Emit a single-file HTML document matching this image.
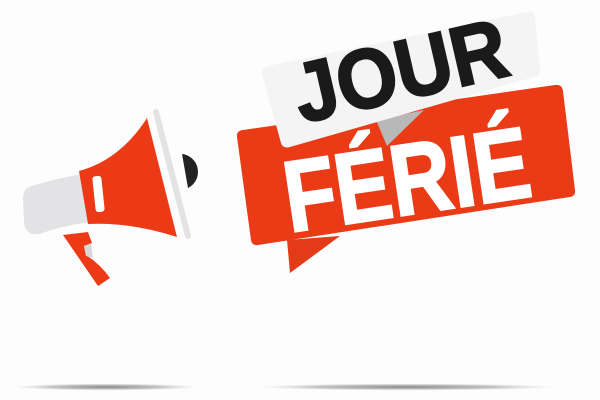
<!DOCTYPE html>
<html><head><meta charset="utf-8"><style>
html,body{margin:0;padding:0;background:#fdfdfd;}
svg{display:block}
</style></head><body>
<svg width="600" height="400" viewBox="0 0 600 400" xmlns="http://www.w3.org/2000/svg">
<defs>
<radialGradient id="sh" cx="50%" cy="50%" r="50%">
<stop offset="0" stop-color="#888"/><stop offset="0.6" stop-color="#aaa" stop-opacity="0.7"/><stop offset="1" stop-color="#ccc" stop-opacity="0"/>
</radialGradient>
</defs>
<rect width="600" height="400" fill="#fdfdfd"/>
<ellipse cx="106" cy="387" rx="92" ry="3.5" fill="url(#sh)"/>
<ellipse cx="406" cy="387" rx="150" ry="3.5" fill="url(#sh)"/>

<!-- megaphone -->
<path d="M63 235 L88 232 L92 243 L84 246 L86 255 Q100 264 110 278 L98 286 Z" fill="#ec3a16"/>
<path d="M84 246 L91 244 L93 258 L86 256 Z" fill="#d8d8d8"/>
<path d="M32 186 Q50 180 82 174 L90 222 Q60 226 40 234 Q25 236 24 222 L23 198 Q23 188 32 186 Z" fill="#e3e3e5"/>
<path d="M79 171 Q120 160 147 118 L177 237 Q130 222 88 224 Z" fill="#ec3a16"/>
<rect x="94" y="176" width="9" height="36" rx="3" fill="#fff" transform="rotate(-6 98 194)"/>
<path d="M182 154 A18 18 0 0 1 188 188 Z" fill="#222"/>
<line x1="156" y1="112" x2="188" y2="236" stroke="#e3e3e5" stroke-width="6" stroke-linecap="round"/>

<!-- red bubble -->
<path d="M287 240 L290 273 L340 236 Z" fill="#e33a17"/>
<path d="M243 130 L555 85 Q562 84 563 91 L575 190 Q576 196 570 197 L258 245 Q252 246 251 240 L237 137 Q236 131 243 130 Z" fill="#ea3a16"/>
<!-- white bubble -->
<path d="M376 120 L387 146 L424 110 Z" fill="#b8b8b8"/>
<path d="M268 66 L527 12 Q534 11 535 18 L540 70 Q541 76 534 77 L290 147 Q283 149 281 143 L262 74 Q261 67 268 66 Z" fill="#f4f4f4"/>
<text x="0" y="0" font-family="Liberation Sans, sans-serif" font-weight="bold" font-size="78" fill="#1a1a1a" stroke="#1a1a1a" stroke-width="2" text-anchor="middle" transform="translate(407 99) rotate(-13) scale(1,1.08)">JOUR</text>
<text x="0" y="0" font-family="Liberation Sans, sans-serif" font-weight="bold" font-size="84" fill="#fff" stroke="#fff" stroke-width="2" text-anchor="middle" transform="translate(412 214) rotate(-8.5) scale(1,1.2)">FÉRIÉ</text>
</svg>
</body></html>
